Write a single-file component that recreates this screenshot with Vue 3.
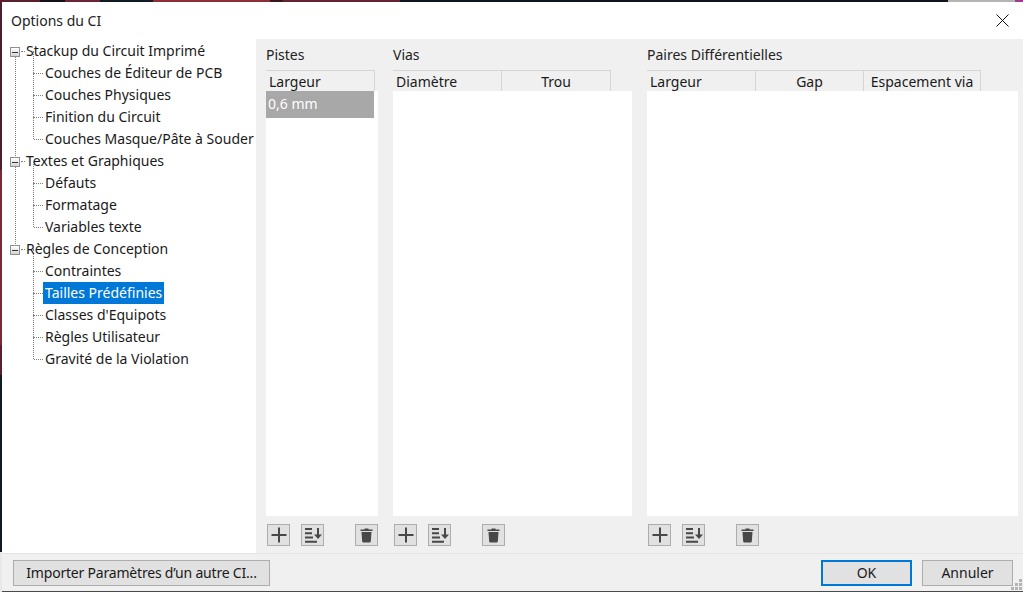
<script setup>
const groups = [
  { label: 'Stackup du Circuit Imprimé', items: ['Couches de Éditeur de PCB', 'Couches Physiques', 'Finition du Circuit', 'Couches Masque/Pâte à Souder'] },
  { label: 'Textes et Graphiques', items: ['Défauts', 'Formatage', 'Variables texte'] },
  { label: 'Règles de Conception', items: ['Contraintes', 'Tailles Prédéfinies', "Classes d'Equipots", 'Règles Utilisateur', 'Gravité de la Violation'] }
]
const selected = 'Tailles Prédéfinies'

const panels = [
  { title: 'Pistes', cls: 'p-tracks', cols: [{ name: 'Largeur', w: 109, left: true }], rows: ['0,6 mm'] },
  { title: 'Vias', cls: 'p-vias', cols: [{ name: 'Diamètre', w: 109, left: true }, { name: 'Trou', w: 109 }], rows: [] },
  { title: 'Paires Différentielles', cls: 'p-pairs', cols: [{ name: 'Largeur', w: 109, left: true }, { name: 'Gap', w: 108 }, { name: 'Espacement via', w: 117 }], rows: [] }
]
</script>

<template>
  <div class="desktop">
    <div class="dialog">
      <div class="titlebar">
        <span class="title">Options du CI</span>
        <svg class="close" width="13" height="13" viewBox="0 0 13 13">
          <path d="M0.5 0.5L12.5 12.5M12.5 0.5L0.5 12.5" stroke="#111" stroke-width="1" fill="none" />
        </svg>
      </div>

      <div class="body">
        <div class="tree">
          <div class="group" v-for="g in groups" :key="g.label">
            <div class="node">
              <span class="expander"><span class="minus"></span></span>
              <span class="label">{{ g.label }}</span>
            </div>
            <div class="leaf" v-for="item in g.items" :key="item">
              <span class="label" :class="{ selected: item === selected }">{{ item }}</span>
            </div>
          </div>
        </div>

        <div class="content">
          <div class="panel" v-for="p in panels" :key="p.title" :class="p.cls">
            <div class="panel-title">{{ p.title }}</div>
            <div class="head">
              <div class="col" v-for="c in p.cols" :key="c.name" :class="{ left: c.left }" :style="{ width: c.w + 'px' }">{{ c.name }}</div>
            </div>
            <div class="grid">
              <div class="row" v-for="r in p.rows" :key="r">{{ r }}</div>
            </div>
            <div class="tools">
              <button class="tool">
                <svg width="16" height="16" viewBox="0 0 16 16"><path d="M8 0.5V15.5M0.5 8H15.5" stroke="#484848" stroke-width="2" fill="none" /></svg>
              </button>
              <button class="tool">
                <svg width="18" height="16" viewBox="0 0 18 16"><path d="M1 2H8M1 6.3H8M1 10.6H9M1 14.8H13" stroke="#484848" stroke-width="2" fill="none" /><path d="M14 1V9" stroke="#484848" stroke-width="2" fill="none" /><path d="M10 7.5H18L14 12Z" fill="#484848" /></svg>
              </button>
              <button class="tool trash">
                <svg width="13" height="15" viewBox="0 0 13 15"><path d="M4.5 0.5H8.5V1.5H12.5V3H0.5V1.5H4.5Z" fill="#484848" /><path d="M1.5 4H11.5L10.8 13.4Q10.7 14.5 9.6 14.5H3.4Q2.3 14.5 2.2 13.4Z" fill="#484848" /></svg>
              </button>
            </div>
          </div>
        </div>
      </div>

      <div class="footer">
        <button class="btn import">Importer Paramètres d’un autre CI...</button>
        <div class="spacer"></div>
        <button class="btn ok">OK</button>
        <button class="btn cancel">Annuler</button>
        <svg class="grip" width="12" height="12" viewBox="0 0 12 12">
          <g fill="#b4b4b4">
            <rect x="8" y="0" width="3" height="3" />
            <rect x="4" y="4" width="3" height="3" />
            <rect x="8" y="4" width="3" height="3" />
            <rect x="0" y="8" width="3" height="3" />
            <rect x="4" y="8" width="3" height="3" />
            <rect x="8" y="8" width="3" height="3" />
          </g>
        </svg>
      </div>
    </div>
  </div>
</template>

<style>
html, body {
  margin: 0;
  background: #1a1016;
}
</style>

<style scoped>
/* het bureaublad dat rond het venster nog net zichtbaar is */
.desktop {
  width: 1023px;
  height: 592px;
  padding: 2px 0 1px 2px;
  box-sizing: border-box;
  background-color: #4a4a4a;
  background-repeat: no-repeat;
  background-size: 100% 2px, 2px 100%;
  background-position: 0 0, 0 0;
  background-image:
    linear-gradient(90deg, #5a1f2e 0 40px, #14101a 40px 65px, #6a2433 65px 100px, #0f1a22 100px 153px, #8f2d38 153px 270px, #3a1620 270px 283px, #66222f 283px 400px, #0d1820 400px 580px, #10141c 580px 948px, #b4b4b4 948px 1015px, #a23a8a 1015px),
    linear-gradient(180deg, #4d1f2e 0 170px, #7a2a35 170px 345px, #5a1f2e 345px 375px, #0f1a24 375px 552px, #e8e8e8 552px);
  overflow: hidden;
}

.dialog {
  height: 100%;
  display: flex;
  flex-direction: column;
  background: #f0f0f0;
  font-family: "Noto Sans", "Open Sans", sans-serif;
  font-size: 14px;
  color: #1a1a1a;
}

.titlebar {
  height: 37px;
  flex: none;
  display: flex;
  align-items: center;
  justify-content: space-between;
  background: #fff;
  padding: 0 14px 0 9px;
}

.title {
  color: #222;
}

.body {
  flex: 1;
  display: flex;
  min-height: 0;
  border-bottom: 1px solid #e4e4e4;
}

.tree {
  width: 254px;
  flex: none;
  background: #fff;
  padding-top: 1px;
  box-sizing: border-box;
  white-space: nowrap;
  overflow: hidden;
}

.group {
  position: relative;
}

/* stippellijn van de bovenste knoop naar de volgende */
.group:not(:last-child)::before {
  content: "";
  position: absolute;
  left: 13px;
  top: 17px;
  bottom: -6px;
  border-left: 1px dotted #808080;
}

.node,
.leaf {
  height: 22px;
  display: flex;
  align-items: center;
  position: relative;
}

.node {
  padding-left: 22px;
}

.leaf {
  padding-left: 41px;
}

.node::after {
  content: "";
  position: absolute;
  left: 19px;
  top: 11px;
  width: 4px;
  border-top: 1px dotted #808080;
}

.leaf::before {
  content: "";
  position: absolute;
  left: 31px;
  top: -11px;
  height: 22px;
  border-left: 1px dotted #808080;
}

.leaf::after {
  content: "";
  position: absolute;
  left: 32px;
  top: 11px;
  width: 9px;
  border-top: 1px dotted #808080;
}

.expander {
  position: absolute;
  left: 8px;
  top: 7px;
  width: 8px;
  height: 8px;
  border: 1px solid #919191;
  background: linear-gradient(#fff, #d4d4d4);
  display: flex;
  align-items: center;
  justify-content: center;
  z-index: 1;
}

.minus {
  width: 6px;
  height: 1px;
  background: #333;
}

.label {
  padding: 0 2px;
  line-height: 22px;
}

.selected {
  background: #0078d7;
  color: #fff;
}

.content {
  flex: 1;
  display: flex;
  padding: 5px 10px 0 10px;
  min-width: 0;
}

.panel {
  display: flex;
  flex-direction: column;
  flex: none;
}

.p-tracks {
  width: 112px;
  margin-right: 15px;
}

.p-vias {
  width: 239px;
  margin-right: 15px;
}

.p-pairs {
  width: 371px;
}

.panel-title {
  height: 26px;
  line-height: 22px;
  color: #222;
}

.head {
  display: flex;
  height: 21px;
  width: fit-content;
  flex: none;
  border-top: 1px solid #d5d5d5;
  box-sizing: border-box;
}

.col {
  border-right: 1px solid #d5d5d5;
  box-sizing: border-box;
  text-align: center;
  line-height: 21px;
}

.col.left {
  text-align: left;
  padding-left: 3px;
}

.grid {
  flex: 1;
  background: #fff;
  min-height: 0;
}

.row {
  width: 108px;
  height: 27px;
  line-height: 26px;
  background: #a8a8a8;
  color: #fff;
  padding-left: 2px;
  box-sizing: border-box;
}

.tools {
  flex: none;
  height: 37px;
  display: flex;
  align-items: center;
  gap: 11px;
  padding-left: 1px;
  padding-top: 1px;
  box-sizing: border-box;
}

.tool {
  flex: none;
  width: 23px;
  height: 22px;
  padding: 0;
  background: #e1e1e1;
  border: 1px solid #adadad;
  display: flex;
  align-items: center;
  justify-content: center;
}

.tool.trash {
  margin-left: 20px;
}

.footer {
  height: 37px;
  flex: none;
  display: flex;
  align-items: center;
  padding: 0 10px 0 11px;
  position: relative;
}

.spacer {
  flex: 1;
}

.btn {
  height: 26px;
  padding: 0;
  font: inherit;
  color: #1a1a1a;
  background: #e1e1e1;
  border: 1px solid #adadad;
  box-sizing: border-box;
}

.import {
  width: 257px;
  letter-spacing: -0.2px;
}

.ok {
  width: 91px;
  border: 2px solid #0078d7;
}

.cancel {
  width: 91px;
  margin-left: 10px;
}

.grip {
  position: absolute;
  right: 0;
  bottom: 0;
}
</style>
